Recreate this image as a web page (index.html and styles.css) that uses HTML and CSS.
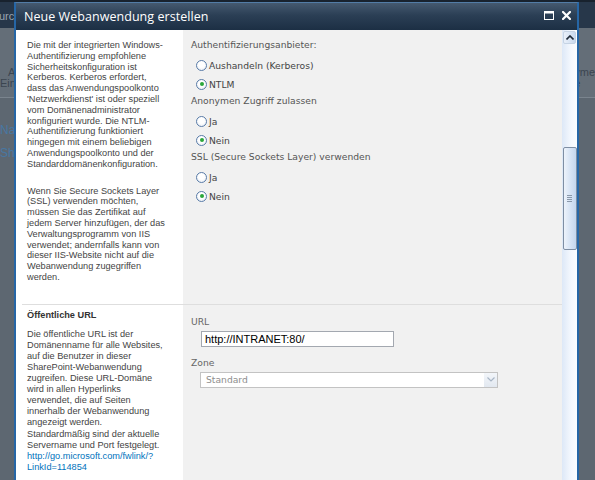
FILE: index.html
```html
<!DOCTYPE html>
<html lang="de">
<head>
<meta charset="utf-8">
<title>Neue Webanwendung erstellen</title>
<link rel="stylesheet" href="styles.css">
</head>
<body>
<div class="bgpage">
  <div class="bg-top"><span class="bg-title">urce</span></div>
  <div class="bg-ribbon">
    <div class="rib rib-left"><span>Al</span><span>Eins</span></div>
    <div class="rib rib-right"><span>yme</span><span class="rib-e">e</span></div>
  </div>
  <div class="bg-nav"><span>Na</span><span>Sh</span></div>
</div>

<div class="dialog">
  <div class="titlebar">
    <span class="title">Neue Webanwendung erstellen</span>
    <span class="tb-btns">
      <svg class="tb-icon" width="10" height="9" viewBox="0 0 10 9"><rect x="0.5" y="0.5" width="9" height="8" fill="none" stroke="#fff" stroke-width="1"/><rect x="0" y="0" width="10" height="2.5" fill="#fff"/></svg>
      <svg class="tb-icon" width="9" height="9" viewBox="0 0 9 9"><path d="M1 1 L8 8 M8 1 L1 8" stroke="#fff" stroke-width="2.2" stroke-linecap="square"/></svg>
    </span>
  </div>
  <div class="dlg-body">
    <div class="main">
      <div class="section">
        <div class="desc">
          <p>Die mit der integrierten Windows-<br>Authentifizierung empfohlene<br>Sicherheitskonfiguration ist<br>Kerberos. Kerberos erfordert,<br>dass das Anwendungspoolkonto<br>'Netzwerkdienst' ist oder speziell<br>vom Domänenadministrator<br>konfiguriert wurde. Die NTLM-<br>Authentifizierung funktioniert<br>hingegen mit einem beliebigen<br>Anwendungspoolkonto und der<br>Standarddomänenkonfiguration.</p>
          <p class="para2">Wenn Sie Secure Sockets Layer<br>(SSL) verwenden möchten,<br>müssen Sie das Zertifikat auf<br>jedem Server hinzufügen, der das<br>Verwaltungsprogramm von IIS<br>verwendet; andernfalls kann von<br>dieser IIS-Website nicht auf die<br>Webanwendung zugegriffen<br>werden.</p>
        </div>
        <div class="controls">
          <div class="group">
            <div class="glabel">Authentifizierungsanbieter:</div>
            <div class="radio-row"><span class="radio"></span><span>Aushandeln (Kerberos)</span></div>
            <div class="radio-row"><span class="radio checked"></span><span>NTLM</span></div>
          </div>
          <div class="group">
            <div class="glabel">Anonymen Zugriff zulassen</div>
            <div class="radio-row"><span class="radio"></span><span>Ja</span></div>
            <div class="radio-row"><span class="radio checked"></span><span>Nein</span></div>
          </div>
          <div class="group">
            <div class="glabel">SSL (Secure Sockets Layer) verwenden</div>
            <div class="radio-row"><span class="radio"></span><span>Ja</span></div>
            <div class="radio-row"><span class="radio checked"></span><span>Nein</span></div>
          </div>
        </div>
      </div>
      <div class="section sep">
        <div class="desc desc2">
          <div class="heading">Öffentliche URL</div>
          <p>Die öffentliche URL ist der<br>Domänenname für alle Websites,<br>auf die Benutzer in dieser<br>SharePoint-Webanwendung<br>zugreifen. Diese URL-Domäne<br>wird in allen Hyperlinks<br>verwendet, die auf Seiten<br>innerhalb der Webanwendung<br>angezeigt werden.<br>Standardmäßig sind der aktuelle<br>Servername und Port festgelegt.<br><a class="link" href="#">http://go.microsoft.com/fwlink/?<br>LinkId=114854</a></p>
        </div>
        <div class="controls controls2">
          <div class="flabel">URL</div>
          <div class="textbox">http://INTRANET:80/</div>
          <div class="flabel zone">Zone</div>
          <div class="select"><span>Standard</span><span class="sel-arrow"><svg width="8" height="5" viewBox="0 0 8 5"><path d="M0.5 0.5 L4 4 L7.5 0.5" fill="none" stroke="#a9b6c6" stroke-width="1.2"/></svg></span></div>
        </div>
      </div>
    </div>
    <div class="scrollbar">
      <div class="sb-up"><svg width="8" height="5" viewBox="0 0 8 5"><path d="M0.5 4.5 L4 1 L7.5 4.5" fill="none" stroke="#1e2a38" stroke-width="1.6"/></svg></div>
      <div class="sb-thumb"><span class="grip"></span></div>
    </div>
  </div>
</div>
</body>
</html>
```

FILE: styles.css
```css
* { box-sizing: border-box; }
html, body { margin: 0; padding: 0; }
body {
  width: 595px;
  height: 480px;
  overflow: hidden;
  position: relative;
  background: #5d6771;
  font-family: "Liberation Sans", Arial, sans-serif;
}

/* background page under the modal */
.bg-top {
  height: 28px;
  background: #27374a;
  border-top: 2px solid #18222e;
  padding-top: 7px;
}
.bg-title {
  display: block;
  margin-left: -1px;
  color: #9aa5b1;
  font-size: 11px;
  line-height: 14px;
}
.bg-ribbon {
  height: 70px;
  background: #646e78;
  border-bottom: 1px solid #7a848e;
  display: flex;
  justify-content: space-between;
  padding-top: 39px;
}
.rib {
  display: flex;
  flex-direction: column;
  font-size: 11px;
  line-height: 11px;
  color: #3b4550;
}
.rib-left span:first-child { padding-left: 8px; }
.rib-right { align-items: flex-start; }
.bg-nav {
  display: flex;
  flex-direction: column;
  gap: 12px;
  padding-top: 27px;
  font-size: 12px;
  line-height: 11px;
  color: #4877a3;
}

/* dialog */
.dialog {
  position: absolute;
  left: 14px;
  top: 2px;
  width: 565px;
  height: 490px;
  border: 2px solid #2666a6;
  border-top: 1px solid #527ca6;
  display: flex;
  flex-direction: column;
}
.titlebar {
  height: 27px;
  flex: none;
  display: flex;
  align-items: center;
  justify-content: space-between;
  padding: 0 6px 0 8px;
  background: linear-gradient(#45596f, #2b3f55 45%, #1c2f44);
}
.title {
  color: #fff;
  font-family: "Open Sans", "DejaVu Sans", sans-serif;
  font-size: 12.5px;
  letter-spacing: 0.05px;
  margin-top: -1px;
}
.tb-btns {
  display: flex;
  gap: 8px;
  align-items: center;
  margin-top: -2px;
}
.tb-icon { display: block; }

.dlg-body {
  flex: 1;
  display: flex;
  min-height: 0;
}
.main {
  flex: 1;
  background: linear-gradient(90deg, #fff 167px, #f1f1f1 167px);
  overflow: hidden;
}
.section {
  display: flex;
  margin-left: 6px;
}
.sep { border-top: 1px solid #dedede; }

.desc {
  width: 161px;
  flex: none;
  padding: 10px 6px 21px 5px;
  color: #444;
  font-family: "Liberation Sans", Arial, sans-serif;
  font-size: 9.2px;
  line-height: 10.8px;
}
.desc p { margin: 0; white-space: nowrap; }
.desc .para2 { margin-top: 16px; }
.desc2 { padding-top: 5px; line-height: 11.1px; }
.heading {
  font-weight: bold;
  color: #333;
  line-height: 11px;
  margin-bottom: 8px;
}
.link { color: #0072bc; text-decoration: none; }

.controls {
  flex: 1;
  padding: 8.5px 0 0 8px;
  font-family: "DejaVu Sans", Verdana, sans-serif;
  font-size: 9.2px;
  line-height: 11px;
  color: #555;
}
.group + .group { margin-top: 1px; }
.glabel { margin-bottom: 6px; }
.radio-row {
  display: flex;
  align-items: center;
  gap: 2px;
  height: 19px;
  padding-left: 5px;
  color: #444;
}
.radio {
  width: 11px;
  height: 11px;
  border: 1px solid #5a7ca8;
  border-radius: 50%;
  background: radial-gradient(circle at 50% 40%, #fff 40%, #dfe6ef);
  display: flex;
  align-items: center;
  justify-content: center;
}
.radio.checked::after {
  content: "";
  width: 4px;
  height: 4px;
  border-radius: 50%;
  background: #2aa63a;
}

.controls2 { padding-top: 11.5px; color: #666; }
.flabel { margin-bottom: 4px; }
.flabel.zone { margin-top: 9.5px; }
.textbox {
  margin-left: 10px;
  width: 193px;
  height: 16px;
  border: 1px solid #a3a8b0;
  background: #fff;
  padding-left: 3px;
  color: #000;
  font-family: "Liberation Sans", Arial, sans-serif;
  font-size: 11px;
  line-height: 14px;
}
.select {
  margin-left: 9px;
  width: 298px;
  height: 16px;
  border: 1px solid #c3c3c3;
  background: #fff;
  display: flex;
  justify-content: space-between;
  align-items: center;
  padding-left: 5px;
  color: #8e8e8e;
}
.sel-arrow {
  width: 13px;
  height: 14px;
  background: linear-gradient(#f3f6fa, #e2e8f0);
  display: flex;
  align-items: center;
  justify-content: center;
}

/* scrollbar */
.scrollbar {
  width: 15px;
  flex: none;
  background: linear-gradient(90deg, #dde8f7, #f4f8fe 60%, #fbfdff);
  display: flex;
  flex-direction: column;
  align-items: center;
}
.sb-up {
  margin-top: 1px;
  width: 13px;
  height: 13px;
  border: 1px solid #c5d3e4;
  border-radius: 2px;
  background: linear-gradient(90deg, #e9f0fa, #c9d9ee);
  display: flex;
  align-items: center;
  justify-content: center;
}
.sb-thumb {
  margin-top: 103px;
  width: 14px;
  height: 103px;
  border: 1px solid #7e8ea3;
  border-radius: 2px;
  background: linear-gradient(90deg, #edf3fb, #d7e4f5 50%, #c4d6ee);
  display: flex;
  align-items: center;
  justify-content: center;
}
.grip {
  width: 5px;
  height: 7px;
  background: repeating-linear-gradient(#8a98aa 0 1px, transparent 1px 2px);
}
```
